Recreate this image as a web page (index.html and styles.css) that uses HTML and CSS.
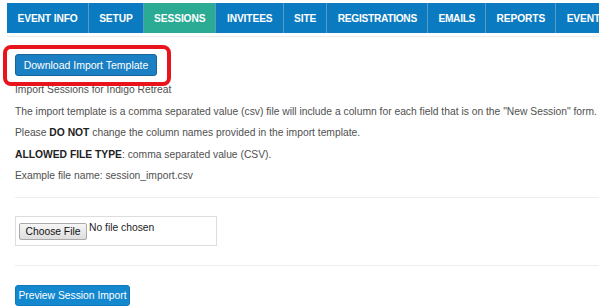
FILE: index.html
```html
<!DOCTYPE html>
<html>
<head>
<meta charset="utf-8">
<link rel="stylesheet" href="styles.css">
</head>
<body>
<nav class="tabs">
  <a class="tab">EVENT INFO</a>
  <a class="tab">SETUP</a>
  <a class="tab active">SESSIONS</a>
  <a class="tab">INVITEES</a>
  <a class="tab">SITE</a>
  <a class="tab tight">REGISTRATIONS</a>
  <a class="tab tight">EMAILS</a>
  <a class="tab">REPORTS</a>
  <a class="tab">EVENT TOOLS</a>
</nav>
<div class="rule-top"></div>
<main class="content">
  <div class="btn-wrap">
    <button class="btn btn-download">Download Import Template</button>
    <span class="highlight"></span>
  </div>
  <p>Import Sessions for Indigo Retreat</p>
  <p>The import template is a comma separated value (csv) file will include a column for each field that is on the "New Session" form.</p>
  <p>Please <b>DO NOT</b> change the column names provided in the import template.</p>
  <p><b>ALLOWED FILE TYPE</b>: comma separated value (CSV).</p>
  <p>Example file name: session_import.csv</p>
  <hr class="sep sep-1">
  <div class="file-box">
    <span class="file-btn">Choose File</span>
    <span class="file-name">No file chosen</span>
  </div>
  <hr class="sep sep-2">
  <button class="btn btn-preview">Preview Session Import</button>
</main>
</body>
</html>
```
FILE: styles.css
```css
html, body {
  margin: 0;
  padding: 0;
  background: #fff;
  font-family: "Liberation Sans", Arial, sans-serif;
  font-size: 10.3px;
  color: #505050;
  overflow: hidden;
}

.tabs {
  display: flex;
  margin: 3px 0 0 7px;
  height: 30px;
  background: #0b7bc1;
  white-space: nowrap;
  overflow: hidden;
}

.tab {
  flex: none;
  display: flex;
  align-items: center;
  padding: 0 10px 0 10.5px;
  border-right: 1px solid #5b9cc6;
  color: #fff;
  font-weight: bold;
  font-size: 10.2px;
  letter-spacing: -0.1px;
}

.tab.tight {
  letter-spacing: -0.3px;
}

.tab.active {
  background: #2bab94;
}

.rule-top {
  margin: 3px 0 0 7px;
  height: 1px;
  background: #ececec;
}

.content {
  padding-left: 15px;
}

.btn-wrap {
  position: relative;
  display: inline-block;
  margin-top: 17px;
  vertical-align: top;
}

.btn {
  display: block;
  font-family: "Liberation Sans", Arial, sans-serif;
  font-size: 10.3px;
  color: #fff;
  border-radius: 3px;
  cursor: pointer;
}

.btn-download {
  width: 142px;
  height: 22px;
  padding: 0;
  background: #1a7fc3;
  border: 1px solid #17649b;
  font-size: 10.5px;
}

.highlight {
  position: absolute;
  left: -12px;
  top: -9px;
  right: -14px;
  bottom: -10px;
  border: 4px solid #e9131b;
  border-radius: 8px;
}

p {
  margin: 7px 0 0;
  line-height: 14.5px;
}

b {
  color: #222;
}

.sep {
  border: 0;
  height: 1px;
  background: #eeeeee;
  margin: 0;
}

.sep-1 {
  margin-top: 13px;
}

.file-box {
  margin-top: 18px;
  width: 200px;
  height: 28px;
  border: 1px solid #dddddd;
  display: flex;
  align-items: flex-start;
  padding: 0;
}

.file-btn {
  margin: 6px 0 0 3px;
  width: 66px;
  height: 15px;
  line-height: 15px;
  text-align: center;
  border: 1px solid #a9a9a9;
  border-radius: 2px;
  background: linear-gradient(#f6f6f6, #dedede);
  color: #111;
  font-size: 10.3px;
}

.file-name {
  margin: 5px 0 0 2px;
  color: #222;
}

.sep-2 {
  margin-top: 19px;
}

.btn-preview {
  margin-top: 19px;
  width: 115px;
  height: 21px;
  padding: 0;
  background: #1488cf;
  border: 1px solid #1378b8;
}
```
